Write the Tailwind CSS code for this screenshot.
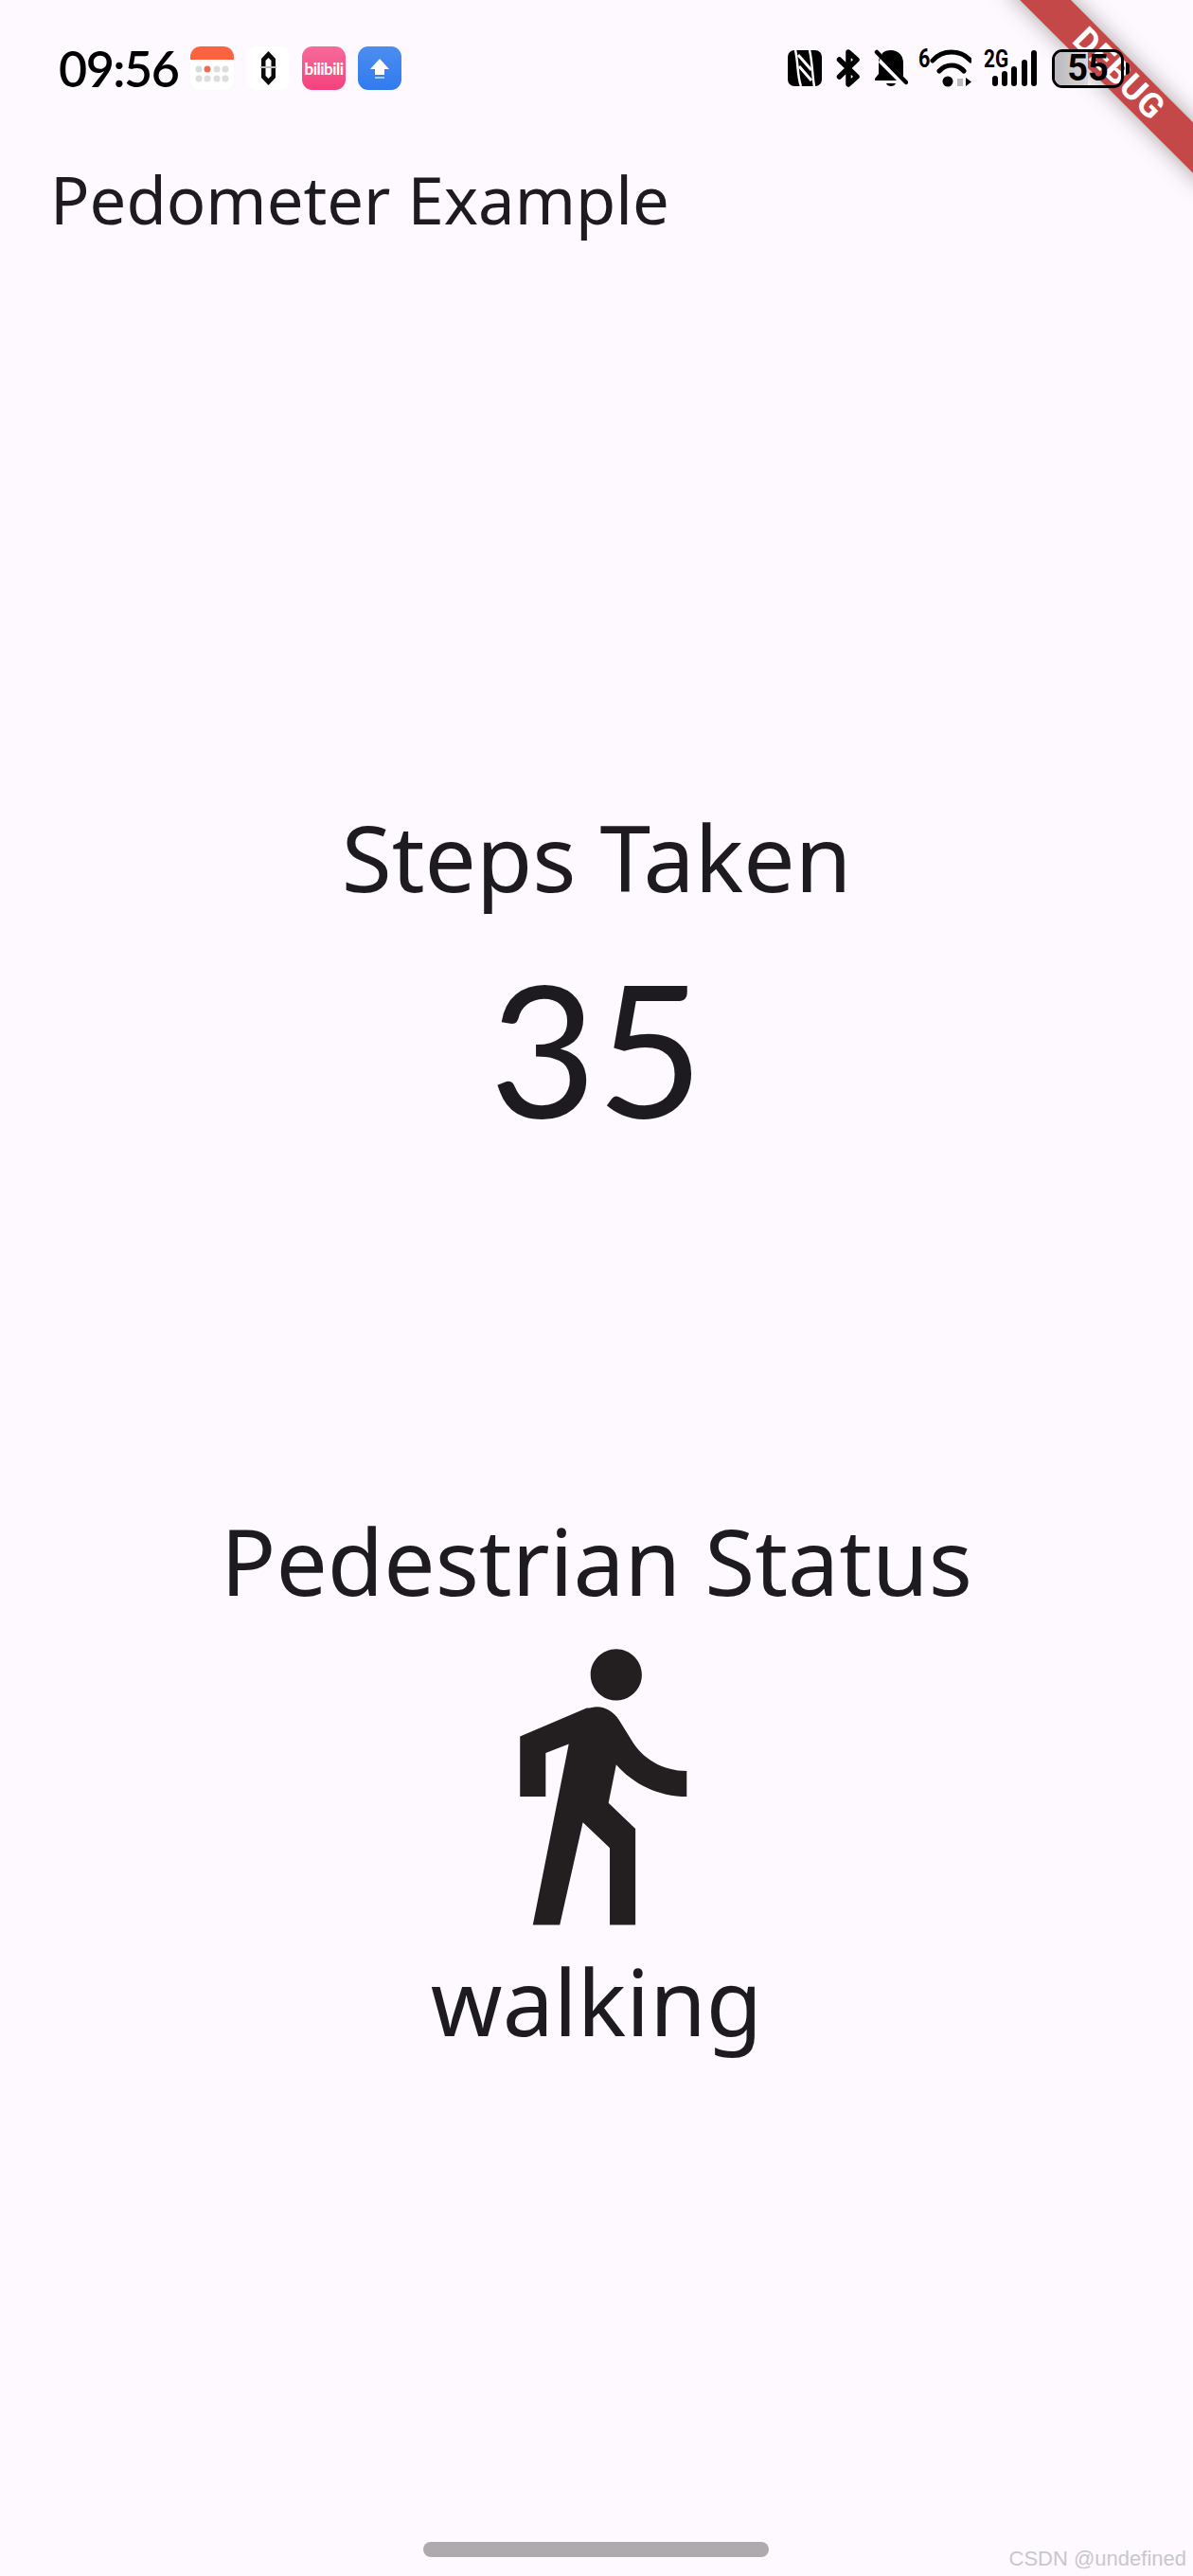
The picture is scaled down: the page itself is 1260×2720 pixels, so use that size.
<!DOCTYPE html>
<html>
<head>
<meta charset="utf-8">
<script src="https://cdn.jsdelivr.net/npm/@tailwindcss/browser@4"></script>
</head>
<body class="bg-[#fdf9fe] font-['Noto_Sans',sans-serif] text-[#1d1b20]">
<div class="relative w-[1260px] h-[2720px] overflow-hidden">

    <!-- status bar -->
    <div class="flex items-center justify-between h-[46px] mt-[49px] pl-[62px] pr-[67px]">
        <div class="flex items-center">
            <span class="w-[124px] text-[52px] leading-[46px] font-semibold text-black font-['Lato',sans-serif] tracking-[-1.500px] whitespace-nowrap">09:56</span>
            <!-- calendar -->
            <svg class="ml-[15px]" width="46" height="46" viewBox="0 0 46 46">
                <rect width="46" height="46" rx="11" fill="#fff"/>
                <path d="M0 14V11A11 11 0 0 1 11 0H35A11 11 0 0 1 46 11V14Z" fill="#fb6340"/>
                <circle cx="9" cy="24" r="3.500" fill="#cfe0e0"/><circle cx="18" cy="24" r="3.500" fill="#ee6a50"/><circle cx="28" cy="24" r="3.500" fill="#ddd"/><circle cx="37" cy="24" r="3.500" fill="#ddd"/>
                <circle cx="9" cy="34" r="3.500" fill="#ddd"/><circle cx="18" cy="34" r="3.500" fill="#ddd"/><circle cx="28" cy="34" r="3.500" fill="#ddd"/><circle cx="37" cy="34" r="3.500" fill="#ddd"/>
            </svg>
            <svg class="ml-[14px]" width="45" height="46" viewBox="0 0 45 46">
                <rect width="45" height="46" rx="11" fill="#fff"/>
                <path d="M22.500 5L30 13V33L22.500 41L15 33V13ZM22.500 12L19.500 15V31L22.500 34L25.500 31V15Z" fill="#0b0b0b" fill-rule="evenodd"/>
                <rect x="14" y="21" width="17" height="2" fill="#bbb"/>
            </svg>
            <div class="ml-[13px] w-[46px] h-[46px] rounded-[11px] bg-gradient-to-b from-[#f76a9a] to-[#f4407e] flex items-center justify-center text-white text-[17px] font-bold leading-none tracking-[-0.500px] font-['Lato',sans-serif]">bilibili</div>
            <svg class="ml-[13px]" width="46" height="46" viewBox="0 0 46 46">
                <defs><linearGradient id="up" x1="0" y1="0" x2="0" y2="1"><stop offset="0" stop-color="#4d8df0"/><stop offset="1" stop-color="#2f7bee"/></linearGradient></defs>
                <rect width="46" height="46" rx="11" fill="url(#up)"/>
                <path d="M23 13L33 24H28V30H18V24H13Z" fill="#fff"/>
                <rect x="18" y="32" width="10" height="2" fill="#a9c9f7"/>
            </svg>
        </div>
        <div class="flex items-center">
            <!-- nfc -->
            <svg width="36" height="38" viewBox="0 0 36 38">
                <rect width="36" height="38" rx="7" fill="#000"/>
                <path d="M8 0C11 12 10 28 14 38M23 0C26 12 26 28 28 38" stroke="#fdf9fe" stroke-width="2.500" fill="none"/>
                <path d="M11 5L25 21M12 17L25 32" stroke="#fdf9fe" stroke-width="3" fill="none"/>
            </svg>
            <!-- bluetooth -->
            <svg class="ml-[15px]" width="26" height="40" viewBox="0 0 26 40">
                <path d="M3.500 11L22 29L13 37V3L22 11L3.500 29" stroke="#000" stroke-width="5.500" fill="none" stroke-linecap="round" stroke-linejoin="round"/>
            </svg>
            <!-- muted bell -->
            <svg class="ml-[14px]" width="36" height="40" viewBox="0 0 36 40">
                <path d="M5 14C5 10 6 8 8 6L31 29V14C31 6 25 1 18 1C14 1 11 2 9 4L5 14V26L1 31V33H24L5 14Z" fill="#000"/>
                <path d="M13 36H23C22 40 14 40 13 36Z" fill="#000"/>
                <path d="M3 3L34 35" stroke="#000" stroke-width="4.500" stroke-linecap="round"/>
            </svg>
            <!-- wifi -->
            <div class="ml-[12px] relative w-[55px] h-[40px]">
                <span class="absolute left-[-1px] top-[-3px] text-[27px] leading-[26px] font-bold text-black font-['Roboto',sans-serif] scale-x-[.8] origin-left">6</span>
                <svg class="absolute left-0 top-0" width="55" height="40" viewBox="0 0 55 40">
                    <path d="M14 12C24 0 44 0 54 12" stroke="#000" stroke-width="5" fill="none" stroke-linecap="round"/>
                    <path d="M21 23C28 15 40 15 47 23" stroke="#000" stroke-width="5" fill="none" stroke-linecap="round"/>
                    <circle cx="30" cy="34" r="5.500" fill="#000"/>
                    <path d="M49 30V39L55 34.500Z" fill="#000"/>
                    <rect x="40" y="31" width="6" height="8" fill="#bbb"/>
                </svg>
            </div>
            <!-- signal -->
            <div class="ml-[13px] relative w-[57px] h-[40px]">
                <span class="absolute left-0 top-[-2px] text-[26px] leading-[24px] font-bold text-black font-['Roboto',sans-serif] scale-x-[.8] origin-left">2G</span>
                <svg class="absolute left-0 top-0" width="57" height="40" viewBox="0 0 57 40">
                    <rect x="9" y="28" width="6" height="11" rx="3" fill="#000"/>
                    <rect x="19" y="23" width="6" height="16" rx="3" fill="#000"/>
                    <rect x="29" y="18" width="6" height="21" rx="3" fill="#000"/>
                    <rect x="40" y="11" width="6" height="28" rx="3" fill="#000"/>
                    <rect x="50" y="1" width="6" height="38" rx="3" fill="#000"/>
                </svg>
            </div>
            <!-- battery -->
            <div class="ml-[15px] relative z-10 w-[76px] h-[41px] rounded-[11px] border-[3px] border-black overflow-hidden flex items-center justify-center">
                <div class="absolute left-0 top-0 bottom-0 w-[50%] bg-gradient-to-r from-[#bdbabf] to-[#d9d6da]"></div>
                <span class="relative text-[38px] leading-none font-bold text-black font-['Roboto',sans-serif]">55</span>
            </div>
            <div class="ml-[2px] relative z-10 w-[4px] h-[13px] bg-black rounded-r-sm"></div>
        </div>
    </div>

    <!-- app bar -->
    <div class="mt-[69px] pl-[53px] text-[68.800px] leading-[92px] font-normal">Pedometer Example</div>

    <!-- body -->
    <div class="flex flex-col items-center mt-[586px]">
        <div class="text-[96.500px] leading-[126px] font-normal">Steps Taken</div>
        <div class="text-[195px] leading-[250px] mt-[12px] font-['Lato',sans-serif]">35</div>
        <div class="text-[96.500px] leading-[126px] mt-[355px] font-normal">Pedestrian Status</div>
        <svg class="mt-[10px]" width="325" height="325" viewBox="0 0 24 24" fill="#231f20">
            <path d="M13.500 5.500c1.100 0 2-.9 2-2s-.9-2-2-2-2 .9-2 2 .9 2 2 2zM9.800 8.900L7 23h2.100l1.800-8 2.100 2v6h2v-7.500l-2.100-2 .6-3C14.800 12 16.800 13 19 13v-2c-1.900 0-3.500-1-4.300-2.400l-1-1.600c-.4-.6-1-1-1.700-1-.3 0-.5.1-.8.1L6 8.300V13h2V9.600l1.800-.7"/>
        </svg>
        <div class="text-[96.500px] leading-[126px] mt-[4px] font-normal">walking</div>
    </div>

    <!-- gesture bar -->
    <div class="absolute left-[447px] top-[2684px] w-[365px] h-[16px] rounded-full bg-[#aeaaae]"></div>

    <!-- watermark -->
    <div class="absolute right-[7px] top-[2690px] text-[22px] leading-[24px] font-['Liberation_Sans',sans-serif] text-[#c9c7ca]">CSDN @undefined</div>

    <!-- debug banner -->
    <div class="absolute left-[1032px] top-[59px] w-[300px] h-[38px] rotate-45 bg-[#b71c1c]/80 shadow-[0_0_24px_rgba(0,0,0,0.35)] flex items-center justify-center text-white text-[36px] font-bold tracking-[1px] font-['Roboto',sans-serif]">DEBUG</div>
</div>
</body>
</html>
